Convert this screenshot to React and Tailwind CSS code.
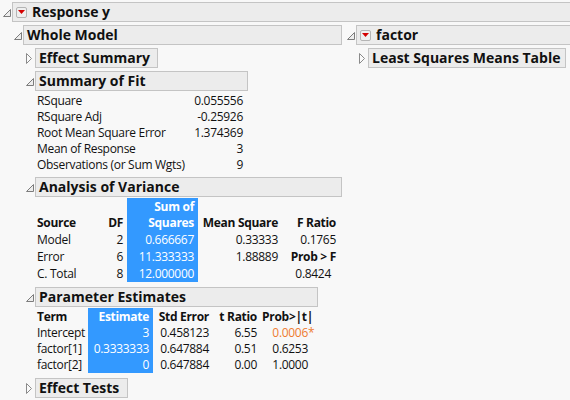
import React from 'react';

/**
 * JMP "Fit Least Squares" report: Response y
 * Outline boxes with disclosure triangles and the blue-selected table columns.
 */

function OpenTri() {
  return (
    <svg width="9" height="9" viewBox="0 0 9 9">
      <polygon points="8.5,1.5 8.5,8.5 1.5,8.5" fill="#ededed" stroke="#7c7c7c" strokeWidth="1" />
    </svg>
  );
}

function ClosedTri() {
  return (
    <svg width="8" height="11" viewBox="0 0 8 11">
      <polygon points="1.5,0.5 6.5,5.5 1.5,10.5" fill="#fafafa" stroke="#8a8a8a" strokeWidth="1" />
    </svg>
  );
}

function MenuBtn() {
  return (
    <span className="mr-[5px] flex h-[11px] w-[11px] items-center justify-center rounded-[2px] border border-[#b4b4b4] bg-[#efefef]">
      <svg width="7" height="4" viewBox="0 0 7 4">
        <polygon points="0,0 7,0 3.5,4" fill="#d40000" />
      </svg>
    </span>
  );
}

function Outline({ title, open = true, menu = false, width, children, className = '' }) {
  return (
    <div className={className}>
      <div className="flex items-center">
        <div className="flex w-[12px] shrink-0 justify-center">{open ? <OpenTri /> : <ClosedTri />}</div>
        <div
          className={`flex h-[20px] shrink-0 items-center border border-[#c4c4c4] bg-[#ececec] pl-[3px] text-[14px] font-bold leading-none text-[#111] ${width}`}
        >
          {menu && <MenuBtn />}
          {title}
        </div>
      </div>
      {children}
    </div>
  );
}

const fit = [
  ['RSquare', '0.055556'],
  ['RSquare Adj', '-0.25926'],
  ['Root Mean Square Error', '1.374369'],
  ['Mean of Response', '3'],
  ['Observations (or Sum Wgts)', '9'],
];

const anova = [
  ['Model', '2', '0.666667', '0.33333', '0.1765'],
  ['Error', '6', '11.333333', '1.88889', 'Prob > F'],
  ['C. Total', '8', '12.000000', '', '0.8424'],
];

const params = [
  ['Intercept', '3', '0.458123', '6.55', '0.0006', true],
  ['factor[1]', '0.3333333', '0.647884', '0.51', '0.6253', false],
  ['factor[2]', '0', '0.647884', '0.00', '1.0000', false],
];

export default function App() {
  return (
    <div className="h-[400px] w-[570px] overflow-hidden bg-[#f8f8f8] pt-[2px] font-['Open_Sans',sans-serif] text-[#111]">
      <Outline title="Response y" menu width="w-[570px]">
        <div className="ml-[11px] mt-[3px] flex gap-[2px]">
          {/* left column */}
          <Outline title="Whole Model" width="w-[319px]" className="w-[331px] shrink-0">
            <div className="ml-[12px]">
              <Outline title="Effect Summary" open={false} width="w-[123px]" className="mt-[3px]" />

              <Outline title="Summary of Fit" width="w-[213px]" className="mt-[3px]">
                <div className="ml-[12px] grid w-[208px] grid-cols-[150px_1fr] pt-[2px] text-[12px] leading-[16px] tracking-[-0.3px]">
                  {fit.map(([k, v]) => (
                    <React.Fragment key={k}>
                      <div className="pl-[2px] whitespace-nowrap">{k}</div>
                      <div className="text-right">{v}</div>
                    </React.Fragment>
                  ))}
                </div>
              </Outline>

              <Outline title="Analysis of Variance" width="w-[307px]" className="mt-[4px]">
                <div className="ml-[12px] mt-[1px] grid grid-cols-[70px_22px_71px_84px_58px] text-[12px] leading-[16px] tracking-[-0.3px]">
                  <div className="flex h-[33px] items-end pl-[2px] font-bold">Source</div>
                  <div className="flex h-[33px] items-end justify-end pr-[4px] font-bold">DF</div>
                  <div className="h-[33px] bg-[#3399ff] pr-[4px] pt-[1px] text-right font-bold text-white">
                    Sum of
                    <br />
                    Squares
                  </div>
                  <div className="flex h-[33px] items-end justify-end pr-[4px] font-bold whitespace-nowrap">Mean Square</div>
                  <div className="flex h-[33px] items-end justify-end pr-[4px] font-bold whitespace-nowrap">F Ratio</div>
                  {anova.map(([src, df, ss, ms, f]) => (
                    <React.Fragment key={src}>
                      <div className="flex h-[17px] items-center pl-[2px]">{src}</div>
                      <div className="flex h-[17px] items-center justify-end pr-[4px]">{df}</div>
                      <div className="flex h-[17px] items-center justify-end bg-[#3399ff] pr-[4px] text-white">{ss}</div>
                      <div className="flex h-[17px] items-center justify-end pr-[4px]">{ms}</div>
                      <div
                        className={`flex h-[17px] items-center justify-end whitespace-nowrap ${
                          f === 'Prob > F' ? 'pr-[4px] font-bold' : src === 'C. Total' ? 'pr-[9px]' : 'pr-[4px]'
                        }`}
                      >
                        {f}
                      </div>
                    </React.Fragment>
                  ))}
                </div>
              </Outline>

              <Outline title="Parameter Estimates" width="w-[283px]" className="mt-[5px]">
                <div className="ml-[12px] mt-[1px] grid grid-cols-[53px_65px_60px_48px_56px] text-[12px] leading-[16px] tracking-[-0.3px]">
                  <div className="flex h-[17px] items-center pl-[2px] font-bold">Term</div>
                  <div className="flex h-[17px] items-center justify-end bg-[#3399ff] pr-[4px] font-bold text-white">Estimate</div>
                  <div className="flex h-[17px] items-center justify-end pr-[4px] font-bold whitespace-nowrap">Std Error</div>
                  <div className="flex h-[17px] items-center justify-end pr-[4px] font-bold whitespace-nowrap">t Ratio</div>
                  <div className="flex h-[17px] items-center justify-end pr-[4px] font-bold whitespace-nowrap">Prob&gt;|t|</div>
                  {params.map(([term, est, se, t, p, sig]) => (
                    <React.Fragment key={term}>
                      <div className="flex h-[16px] items-center pl-[2px] whitespace-nowrap">{term}</div>
                      <div className="flex h-[16px] items-center justify-end bg-[#3399ff] pr-[4px] text-white">{est}</div>
                      <div className="flex h-[16px] items-center justify-end pr-[4px]">{se}</div>
                      <div className="flex h-[16px] items-center justify-end pr-[4px]">{t}</div>
                      <div className={`flex h-[16px] items-center justify-end pr-[9px] ${sig ? 'text-[#ee7b30]' : ''}`}>
                        {p}
                        {sig && <span className="-mr-[6px] w-[6px]">*</span>}
                      </div>
                    </React.Fragment>
                  ))}
                </div>
              </Outline>

              <Outline title="Effect Tests" open={false} width="w-[93px]" className="mt-[5px]" />
            </div>
          </Outline>

          {/* right column */}
          <Outline title="factor" menu width="w-[230px]" className="shrink-0">
            <div className="ml-[12px]">
              <Outline title="Least Squares Means Table" open={false} width="w-[198px]" className="mt-[3px]" />
            </div>
          </Outline>
        </div>
      </Outline>
    </div>
  );
}
